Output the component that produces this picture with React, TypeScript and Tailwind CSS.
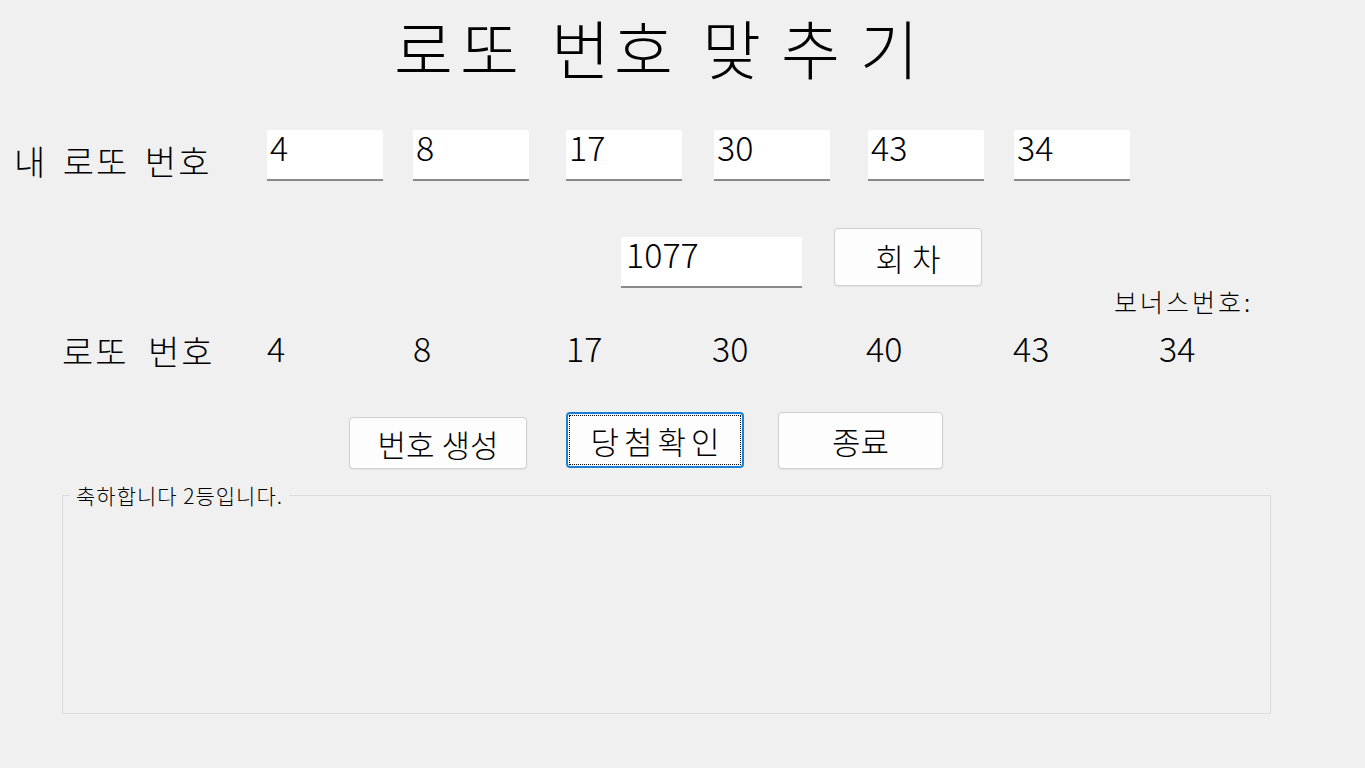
import React from 'react';

const FONT = "font-['Noto_Sans_CJK_KR','Noto_Sans',sans-serif]";

function NumBox({ value, className }: { value: string; className: string }) {
  return (
    <div
      className={`h-[51px] bg-white border-b-2 border-[#8a8a8a] rounded-t-[2px] pl-[3px] text-[34px] leading-none text-black ${className}`}
    >
      {value}
    </div>
  );
}

function WinButton({
  label,
  className,
  textClass = '',
  focused = false,
}: {
  label: string;
  className: string;
  textClass?: string;
  focused?: boolean;
}) {
  if (focused) {
    return (
      <div className={`rounded-[4px] border-2 border-[#1a7fd9] bg-[#fdfdfd] p-[1px] ${className}`}>
        <div
          className={`h-full w-full border border-dotted border-black flex items-center justify-center text-[31px] leading-none ${textClass}`}
        >
          {label}
        </div>
      </div>
    );
  }
  return (
    <div
      className={`rounded-[4px] border border-[#cfcfcf] bg-[#fdfdfd] shadow-[0_1px_1px_rgba(0,0,0,0.05)] flex items-center justify-center text-[31px] leading-none ${className} ${textClass}`}
    >
      {label}
    </div>
  );
}

const myNumbers = [
  { v: '4', c: 'w-[116px] ml-0' },
  { v: '8', c: 'w-[116px] ml-[30px]' },
  { v: '17', c: 'w-[116px] ml-[37px]' },
  { v: '30', c: 'w-[116px] ml-[32px]' },
  { v: '43', c: 'w-[116px] ml-[38px]' },
  { v: '34', c: 'w-[116px] ml-[30px]' },
];

const drawn = [
  { v: '4', c: 'w-[146px]' },
  { v: '8', c: 'w-[153px]' },
  { v: '17', c: 'w-[146px]' },
  { v: '30', c: 'w-[154px]' },
  { v: '40', c: 'w-[147px]' },
  { v: '43', c: 'w-[146px]' },
  { v: '34', c: 'w-[80px]' },
];

export default function App() {
  return (
    <div className={`w-[1365px] h-[768px] bg-[#f0f0f0] text-black font-light overflow-hidden ${FONT}`}>
      {/* 제목 */}
      <div className="h-[130px] pt-[14px] pl-[394px] flex items-start text-[64px] leading-none">
        <span className="w-[157px] tracking-[7px]">로또</span>
        <span className="w-[151px] tracking-[4px]">번호</span>
        <span className="tracking-[20px]">맞추기</span>
      </div>

      {/* 내 로또 번호 */}
      <div className="flex items-start h-[51px]">
        <div className="w-[267px] pl-[14px] mt-[14px] text-[34px] leading-none tracking-[2px] [word-spacing:6px]">
          내 로또 번호
        </div>
        {myNumbers.map((n, i) => (
          <NumBox key={i} value={n.v} className={n.c} />
        ))}
      </div>

      {/* 회차 */}
      <div className="flex items-start mt-[47px] h-[60px]">
        <NumBox value="1077" className="w-[181px] ml-[621px] mt-[9px] pl-[5px]" />
        <WinButton label="회차" className="w-[148px] h-[58px] ml-[32px]" textClass="tracking-[8px] pl-[8px]" />
      </div>

      {/* 보너스번호 */}
      <div className="pl-[1114px] mt-[1px] text-[25px] leading-none tracking-[3px]">보너스번호:</div>

      {/* 로또 번호 */}
      <div className="flex items-start mt-[17px] pl-[62px] text-[34px] leading-none">
        <div className="w-[205px] mt-[3px] tracking-[2px] [word-spacing:10px]">로또 번호</div>
        {drawn.map((n, i) => (
          <div key={i} className={n.c}>
            {n.v}
          </div>
        ))}
      </div>

      {/* 버튼 */}
      <div className="flex items-start mt-[44px]">
        <WinButton label="번호 생성" className="w-[178px] h-[52px] ml-[349px] mt-[5px]" />
        <WinButton
          label="당첨확인"
          className="w-[178px] h-[56px] ml-[39px]"
          textClass="tracking-[5px] pl-[5px]"
          focused
        />
        <WinButton label="종료" className="w-[165px] h-[57px] ml-[34px]" />
      </div>

      {/* 결과 */}
      <fieldset className="ml-[62px] mt-[16px] w-[1209px] h-[229px] border border-[#dcdcdc] pl-[7px]">
        <legend className="px-[6px] text-[21px] leading-[20px] tracking-[1px]">축하합니다 2등입니다.</legend>
      </fieldset>
    </div>
  );
}
